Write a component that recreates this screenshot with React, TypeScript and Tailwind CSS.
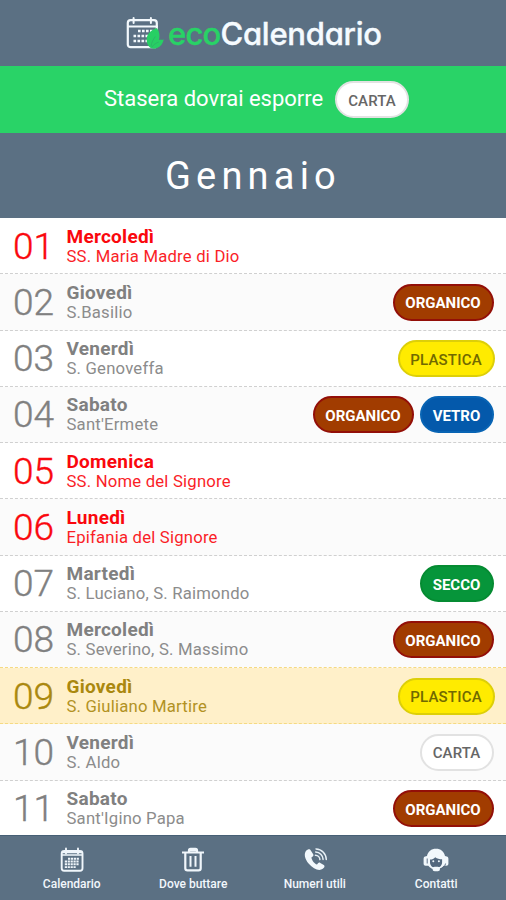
import React from "react";

type Waste = "ORGANICO" | "PLASTICA" | "VETRO" | "SECCO" | "CARTA";

interface Day {
  number: string;
  name: string;
  saint: string;
  waste: Waste[];
  kind?: "holiday" | "today";
}

const days: Day[] = [
  { number: "01", name: "Mercoledì", saint: "SS. Maria Madre di Dio", waste: [], kind: "holiday" },
  { number: "02", name: "Giovedì", saint: "S.Basilio", waste: ["ORGANICO"] },
  { number: "03", name: "Venerdì", saint: "S. Genoveffa", waste: ["PLASTICA"] },
  { number: "04", name: "Sabato", saint: "Sant'Ermete", waste: ["ORGANICO", "VETRO"] },
  { number: "05", name: "Domenica", saint: "SS. Nome del Signore", waste: [], kind: "holiday" },
  { number: "06", name: "Lunedì", saint: "Epifania del Signore", waste: [], kind: "holiday" },
  { number: "07", name: "Martedì", saint: "S. Luciano, S. Raimondo", waste: ["SECCO"] },
  { number: "08", name: "Mercoledì", saint: "S. Severino, S. Massimo", waste: ["ORGANICO"] },
  { number: "09", name: "Giovedì", saint: "S. Giuliano Martire", waste: ["PLASTICA"], kind: "today" },
  { number: "10", name: "Venerdì", saint: "S. Aldo", waste: ["CARTA"] },
  { number: "11", name: "Sabato", saint: "Sant'Igino Papa", waste: ["ORGANICO"] },
];

const pillStyles: Record<Waste, string> = {
  ORGANICO: "w-[101px] bg-[#a13c00] border-[#930f08] text-white font-bold",
  PLASTICA: "w-[97px] -mr-px bg-[#ffeb00] border-[#ddcf08] text-[#716900] font-medium tracking-[0.2px]",
  VETRO: "w-[74px] bg-[#0459ab] border-[#0864b4] text-white font-bold",
  SECCO: "w-[74px] bg-[#06953a] border-[#058b32] text-white font-bold",
  CARTA: "w-[74px] bg-white border-[#e2e2e2] text-[#666] font-medium tracking-[0.1px]",
};

function Pill({ type }: { type: Waste }) {
  return (
    <span className={`flex h-[37px] items-center justify-center rounded-full border-2 pt-[3px] text-[15px] leading-none ${pillStyles[type]}`}>
      {type}
    </span>
  );
}

function Logo() {
  return (
    <svg className="h-[34px] w-[38px] shrink-0" viewBox="0 0 38 34" fill="none">
      <rect x="1.8" y="4.200" width="29" height="27" rx="2.8" stroke="#f2f8fc" strokeWidth="2.2" />
      <path d="M2 10.4H31M7.6 2v5M24.900 2v5" stroke="#f2f8fc" strokeWidth="2" strokeLinecap="round" />
      <path d="M12 15H28M7.5 20H24M7.5 25H21" stroke="#f2f8fc" strokeWidth="2.400" strokeDasharray="2.6 1.400" />
      <path d="M31 12c-6 2-10 5.500-10.300 11-.2 3.500.8 6.500 3.300 8.500 1.500 1.300 4.500 1.500 7 .5 3.500-1.200 5.700-4 6.800-8.500-1.800.4-3.300.2-4.900.4 1.300-4 .5-8.300-1.900-11.900Z" fill="#27cf64" />
      <path d="M25 30.500c.5-4 2.200-7 4.300-10M26 31c2-2.800 3.800-3.700 6.800-5" stroke="#2fae68" strokeWidth=".8" />
    </svg>
  );
}

function CalendarIcon() {
  return (
    <svg className="size-[26px]" viewBox="0 0 26 26" fill="none" stroke="#f0f6fb">
      <rect x="2.700" y="4" width="20.800" height="19.700" rx="2.500" strokeWidth="1.900" />
      <path d="M3 5.500H23M3 8H23" strokeWidth="1.300" />
      <path d="M7 1.500v5M19 1.500v5" strokeWidth="1.900" strokeLinecap="round" />
      <path d="M9 11.700h11M5.800 14.500H20M5.800 17.300H20M5.800 20.100H17" strokeWidth="1.900" strokeDasharray="2.200 .7" />
    </svg>
  );
}

function TrashIcon() {
  return (
    <svg className="size-[26px]" viewBox="0 0 26 26" fill="none" stroke="#f0f6fb">
      <path d="M2 5.500h22M9 5V3.300c0-.9.6-1.500 1.500-1.500h5c.9 0 1.500.6 1.500 1.500V5M5.300 6v15.200c0 1.400.8 2.200 2.200 2.200h11c1.400 0 2.200-.8 2.200-2.200V6" strokeWidth="2.200" />
      <path d="M9.500 3.500h7" strokeWidth="2" />
      <path d="M10.500 9v10.800M15.500 9v10.800" strokeWidth="2" />
    </svg>
  );
}

function PhoneIcon() {
  return (
    <svg className="size-[26px]" viewBox="0 0 26 26" fill="none">
      <path d="M4.300 3.500c-2.700 3-1.700 8.400 2.500 13.300 4.600 5.400 10.500 7.600 14 5l1.300-1.300c.7-.8.5-1.800-.3-2.400l-3.500-2.200c-.8-.5-1.700-.3-2.300.4l-1 1.200c-2.500-.6-5-3.900-5.600-7l1.300-1c.8-.6.9-1.400.5-2.200L8.800 3.500C8.200 2.200 7 1.800 5.900 2.500Z" fill="#f2f8fc" />
      <path d="M14 1.900a10.700 10.700 0 0 1 10.300 10.700M13.700 5a7.800 7.800 0 0 1 7.400 7.400M13.400 8.200a4.600 4.600 0 0 1 4.500 4.400" stroke="#e8f1f7" strokeWidth="1.500" strokeLinecap="round" />
    </svg>
  );
}

function SupportIcon() {
  return (
    <svg className="size-[26px]" viewBox="0 0 26 26" fill="none">
      <path d="M4 9C5 4.500 8.200 1.800 13 1.800S21 4.500 22 9l1.800.6c1 .4 1.600 1.100 1.600 2.200v5c0 1.200-.8 2-2 2h-2.600c-1.900 2.300-4.500 3.800-7.800 3.800-3.300 0-6-1.500-7.700-3.800H2.600c-1.200 0-2-.8-2-2v-5c0-1.100.5-1.800 1.500-2.200Z" fill="#f2f8fc" />
      <path d="M7 12.600c2.200-.1 4-.9 5.200-2.400 2 1.500 4.200 2 6.900 2v3c0 3.400-2.600 5.800-6 5.800s-6.100-2.500-6.100-5.800Z" fill="#52677d" />
      <circle cx="10.300" cy="14.300" r="1" fill="#edf5fa" />
      <circle cx="15.900" cy="14.300" r="1" fill="#edf5fa" />
      <path d="M22.600 16.500c-.5 2.800-2.600 4.800-6 5.500M4.200 11.500v5" stroke="#52677d" strokeWidth=".9" />
      <rect x="9.500" y="19.800" width="7.500" height="4.400" rx="2.200" fill="#f2f8fc" />
    </svg>
  );
}

function DayRow({ day, index }: { day: Day; index: number }) {
  const colors =
    day.kind === "holiday" ? "text-[#fa070d]" : day.kind === "today" ? "text-[#aa880f]" : "text-[#808080]";
  const background = day.kind === "today" ? "bg-[#fff0c9]" : index % 2 ? "bg-[#fbfbfb]" : "bg-white";
  const border = day.kind === "today" || index === 7 ? "border-[#f5da83]" : "border-[#d0d0d0]";
  return (
    <li className={`flex h-[56.250px] shrink-0 items-center border-b border-dashed pt-px pr-[12.500px] pl-[13px] ${colors} ${background} ${border}`}>
      <span className="w-[53px] shrink-0 text-[37px] leading-none font-light [-webkit-text-stroke:0.4px_currentColor]">{day.number}</span>
      <div className="min-w-0 flex-1 pt-px pl-[0.500px] whitespace-nowrap">
        <div className="text-[19px] leading-5 font-bold tracking-[0.260px]">{day.name}</div>
        <div className="text-[16.700px] leading-5 tracking-[0.200px] opacity-90">{day.saint}</div>
      </div>
      <div className="flex gap-[6px]">
        {day.waste.map((type) => <Pill key={type} type={type} />)}
      </div>
    </li>
  );
}

const navigation = [
  { label: "Calendario", icon: <CalendarIcon /> },
  { label: "Dove buttare", icon: <TrashIcon /> },
  { label: "Numeri utili", icon: <PhoneIcon /> },
  { label: "Contatti", icon: <SupportIcon /> },
];

export default function App() {
  return (
    <main className="flex h-[900px] w-[506px] flex-col overflow-hidden bg-[#5b7083] font-['Roboto',sans-serif]">
      <header className="flex h-[66px] shrink-0 items-center pl-[126px]">
        <Logo />
        <h1 className="ml-[4px] flex font-['Inter',sans-serif] text-[31px] leading-none font-medium text-[#f5fbff] [font-feature-settings:'cv11'] [-webkit-text-stroke:0.4px_currentColor] [stroke-linejoin:round]">
          <span className="tracking-[-0.800px] text-[#28d266]">eco</span>
          <span className="tracking-[-0.250px]">Calendario</span>
        </h1>
      </header>
      <section className="flex h-[67px] shrink-0 items-center bg-[#29d367] pl-[104px] text-white">
        <p className="w-[231px] pb-[2px] text-[22px] leading-none whitespace-nowrap">Stasera dovrai esporre</p>
        <Pill type="CARTA" />
      </section>
      <h2 className="flex h-[85px] shrink-0 items-center pl-[165px] text-[38px] leading-none font-normal tracking-[5.200px] text-white">
        Gennaio
      </h2>
      <ul className="flex h-[617px] shrink-0 flex-col overflow-hidden">
        {days.map((day, index) => <DayRow key={day.number} day={day} index={index} />)}
      </ul>
      <nav className="flex h-[65px] shrink-0 justify-center border-t border-[#465f75] pl-[2px]">
        {navigation.map((item) => (
          <div key={item.label} className="flex w-[121.500px] flex-col items-center pt-[11px] text-[12px] font-medium text-[#f2f7fc]">
            {item.icon}
            <span className="mt-px leading-5 whitespace-nowrap">{item.label}</span>
          </div>
        ))}
      </nav>
    </main>
  );
}
